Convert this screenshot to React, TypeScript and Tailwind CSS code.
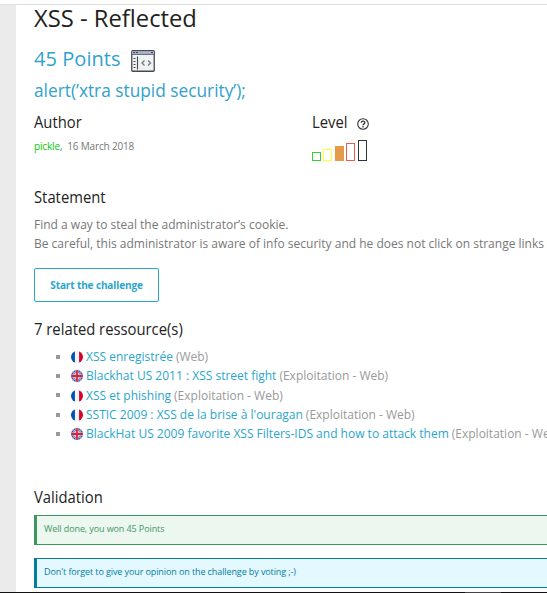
import type { ReactNode } from 'react';

function Heading({ children, className = '' }: { children: ReactNode; className?: string }) {
  return (
    <h2 className={`h-6 w-max origin-left scale-x-[.925] whitespace-nowrap text-[16px] leading-6 text-[#222] ${className}`}>
      {children}
    </h2>
  );
}

function WindowIcon() {
  return (
    <svg width="24" height="22" viewBox="0 0 24 22" fill="none">
      <rect x=".75" y=".75" width="22.5" height="20.5" rx="1" fill="#f0f3f3" stroke="#464854" strokeWidth="1.3" />
      <path d="M1.2 1.2h21.6v3H1.2z" fill="#a6afc5" />
      <path d="M1 4.500h22" stroke="#6b7284" />
      <path d="M2 2.5h2M5 2.5h2M20 2.5h2" stroke="#464854" />
      <path d="M2.5 8.5h2M2.5 11.5h2M2.5 14.5h2M2.5 17.5h2M6.5 6.5v13" stroke="#464854" strokeWidth="1.1" />
      <path d="M13.500 10.500L11 13l2.500 2.500M17 10.500l2.500 2.500-2.500 2.500" stroke="#777" strokeWidth="1.3" />
    </svg>
  );
}

function Flag({ country }: { country: 'fr' | 'gb' }) {
  return (
    <svg className="mr-[3px] mt-px shrink-0" width="12" height="12" viewBox="0 0 512 512">
      <clipPath id="disc"><circle cx="256" cy="256" r="256" /></clipPath>
      {country === 'fr' ? (
        <g clipPath="url(#disc)">
          <path fill="#f4f4f4" d="M0 0h512v512H0z" />
          <path fill="#0052b4" d="M0 0h167v512H0z" />
          <path fill="#d80027" d="M345 0h167v512H345z" />
        </g>
      ) : (
        <g clipPath="url(#disc)">
          <path fill="#2c5aac" d="M0 0h512v512H0z" />
          <path stroke="#eee" strokeWidth="66" d="M0 0l512 512M512 0L0 512" />
          <path stroke="#d83048" strokeWidth="30" d="M0 0l512 512M512 0L0 512" />
          <path stroke="#eee" strokeWidth="120" d="M256 0v512M0 256h512" />
          <path stroke="#d82040" strokeWidth="76" d="M256 0v512M0 256h512" />
        </g>
      )}
    </svg>
  );
}

const resources: { country: 'fr' | 'gb'; title: string; category: string }[] = [
  { country: 'fr', title: 'XSS enregistrée', category: '(Web)' },
  { country: 'gb', title: 'Blackhat US 2011 : XSS street fight', category: '(Exploitation - Web)' },
  { country: 'fr', title: 'XSS et phishing', category: '(Exploitation - Web)' },
  { country: 'fr', title: "SSTIC 2009 : XSS de la brise à l'ouragan", category: '(Exploitation - Web)' },
  { country: 'gb', title: 'BlackHat US 2009 favorite XSS Filters-IDS and how to attack them', category: '(Exploitation - Web)' },
];

export default function App() {
  return (
    <div className="flex h-[593px] w-[547px] flex-col overflow-hidden bg-white font-['Open_Sans',sans-serif]">
      <div className="h-[5px] shrink-0 border-b border-[#e0e0e0]" />
      <div className="flex min-h-0 flex-1">
        <div className="w-4 shrink-0 bg-[#ebebeb]" />
        <main className="min-w-0 flex-1 pl-[18px]">
          <h1 className="h-6 w-max origin-left scale-x-[.97] whitespace-nowrap text-[24.500px] leading-[26px] text-[#222]">XSS - Reflected</h1>
          <div className="mt-3.5 flex h-[30px] text-[20px] leading-8 tracking-[.05px] text-[#31a2cc]">
            <span className="w-[97px]">45 Points</span>
            <span className="pt-[7px]"><WindowIcon /></span>
          </div>
          <div className="mt-1 h-[26px] text-[17.300px] leading-[27px] text-[#31a2cc]">alert(’xtra stupid security’);</div>
          <div className="mt-[7px] flex">
            <section className="w-[278px]">
              <Heading>Author</Heading>
              <p className="mt-1 h-4 text-[10px] leading-4 tracking-[-.16px] text-[#777]">
                <span className="text-[#00c800]">pickle</span>,&nbsp; 16 March 2018
              </p>
            </section>
            <section>
              <div className="flex">
                <div className="w-[45px]"><Heading>Level</Heading></div>
                <svg className="mt-[8px]" width="12" height="12" viewBox="0 0 12 12" fill="none" stroke="#333">
                  <circle cx="6" cy="6" r="5.3" strokeWidth="1.1" />
                  <path d="M4.300 4.800c0-2.100 3.500-2.100 3.500-.1 0 1.200-1.800 1.100-1.800 2.500M6 8v1.500" strokeWidth="1.3" />
                </svg>
              </div>
              <div className="flex h-[27px] items-end">
                <i className="mr-0.5 h-[9px] w-[9px] border border-[#32d232]" />
                <i className="mr-[3px] h-3 w-[9px] border border-[#ffff3c]" />
                <i className="mr-0.5 h-[15px] w-[9px] bg-[#e69b4b]" />
                <i className="mr-[3px] h-[18px] w-[9px] border border-[#f05a46]" />
                <i className="h-[21px] w-[9px] border border-[#333]" />
              </div>
            </section>
          </div>
          <Heading className="mt-6">Statement</Heading>
          <div className="mt-1.5 whitespace-nowrap text-[12px] leading-[19px] text-[#777]">
            <p>Find a way to steal the administrator’s cookie.</p>
            <p>Be careful, this administrator is aware of info security and he does not click on strange links to</p>
          </div>
          <button className="mt-[15px] block h-[34px] w-[125px] rounded-[2px] border border-[#2ba6cb] text-[10px] font-bold leading-8 tracking-[-.12px] text-[#2ba6cb]">Start the challenge</button>
          <Heading className="mt-[15px]">7 related ressource(s)</Heading>
          <ul className="mt-1.5 whitespace-nowrap text-[12px] leading-[19.300px]">
            {resources.map((item) => (
              <li key={item.title} className="flex h-[19.300px] items-center pl-[22px]">
                <span className="mr-[11px] h-1 w-1 shrink-0 bg-[#999]" />
                <Flag country={item.country} />
                <span className="text-[#2ba6cb]">{item.title}</span>
                <span className="ml-[3px] text-[#999]">{item.category}</span>
              </li>
            ))}
          </ul>
          <Heading className="mt-[41.500px]">Validation</Heading>
          <div className="mt-1.5 h-[30px] border-y border-l-[3px] border-[#3c965f] bg-[#ecf7ef] pl-[7px] text-[9px] leading-[26px] tracking-[-.1px] text-[#469664]">Well done, you won 45 Points</div>
          <div className="mt-[13px] h-[30px] border-y border-l-[3px] border-[#007d9f] bg-[#e4f8ff] pl-[7px] text-[9px] leading-[26px] tracking-[-.1px] text-[#007d9f]">Don't forget to give your opinion on the challenge by voting ;-)</div>
        </main>
      </div>
      <div className="flex h-px shrink-0 bg-[#111]">
        <span className="ml-[465px] w-9 bg-[#444]" />
      </div>
    </div>
  );
}
